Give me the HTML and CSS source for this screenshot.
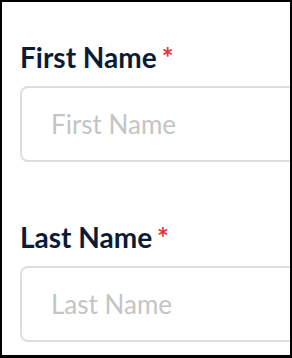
FILE: index.html
```html
<!DOCTYPE html>
<html>
<head>
    <title>Name Form</title>
    <link rel="stylesheet" href="styles.css">
</head>
<body>
    <div class="frame">
        <div class="field">
            <label class="field-label" for="firstName">First Name<span class="required">*</span></label>
            <input type="text" id="firstName" class="field-input" placeholder="First Name">
        </div>

        <div class="field">
            <label class="field-label" for="lastName">Last Name<span class="required">*</span></label>
            <input type="text" id="lastName" class="field-input" placeholder="Last Name">
        </div>
    </div>
</body>
</html>
```

FILE: styles.css
```css
body {
    margin: 0;
    font-family: Lato, "Open Sans", sans-serif;
    background-color: white;
}

.frame {
    box-sizing: border-box;
    width: 292px;
    height: 358px;
    border: 2px solid #000;
    border-bottom-width: 3px;
    padding: 38px 0 0 18px;
    overflow: hidden;
}

.field {
    display: flex;
    flex-direction: column;
    margin-bottom: 58px;
}

.field-label {
    font-size: 28px;
    font-weight: bold;
    line-height: 34px;
    color: #0a1b38;
    margin-bottom: 12px;
}

.required {
    color: #e8343d;
    font-weight: bold;
    margin-left: 5px;
}

.field-input {
    box-sizing: border-box;
    width: 400px;
    height: 76px;
    border: 2px solid #dedede;
    border-radius: 8px;
    padding: 0 0 0 29px;
    font-family: Lato, "Open Sans", sans-serif;
    font-size: 26px;
    color: #333;
    outline: none;
}

.field-input::placeholder {
    color: #c4c4c4;
}
```
